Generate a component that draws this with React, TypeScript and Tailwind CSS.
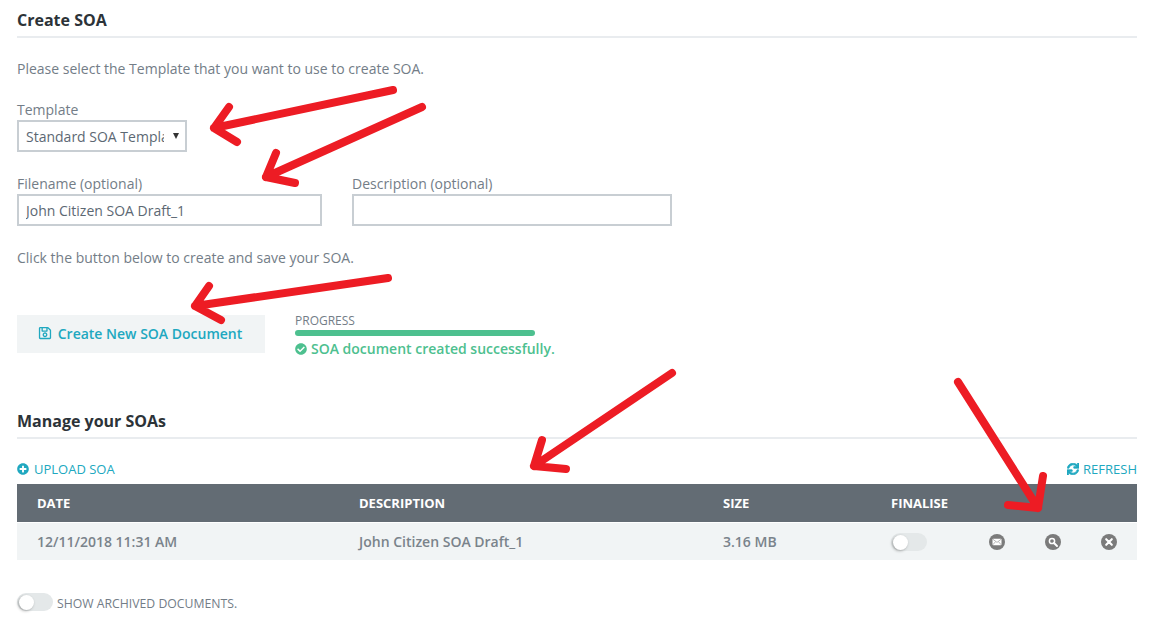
import { FaRegSave, FaCheckCircle, FaPlusCircle, FaSync } from 'react-icons/fa';

function Toggle() {
  return (
    <div className="relative h-[18px] w-[36px] rounded-full bg-[#e4e8e9]">
      <div className="absolute left-[2px] top-[2px] h-[15px] w-[15px] rounded-full bg-white shadow-[-1px_1px_3px_rgba(0,0,0,0.3)]" />
    </div>
  );
}

function MailIcon() {
  return (
    <svg width="16" height="16" viewBox="0 0 16 16">
      <circle cx="8" cy="8" r="8" fill="#7b7b7b" />
      <rect x="3.5" y="4.8" width="9" height="6.4" rx="0.8" fill="#fff" />
      <path d="M3.8 5.2 8 8.4l4.2-3.2M3.8 10.8 6.6 7.6M12.2 10.8 9.4 7.6" fill="none" stroke="#9a9a9a" strokeWidth="0.7" />
    </svg>
  );
}

function SearchIcon() {
  return (
    <svg width="16" height="16" viewBox="0 0 16 16">
      <circle cx="8" cy="8" r="8" fill="#7b7b7b" />
      <circle cx="7" cy="7" r="2.6" fill="none" stroke="#fff" strokeWidth="1.5" />
      <path d="M9 9l3 3" stroke="#fff" strokeWidth="2" strokeLinecap="round" />
    </svg>
  );
}

function CloseIcon() {
  return (
    <svg width="16" height="16" viewBox="0 0 16 16">
      <circle cx="8" cy="8" r="8" fill="#7b7b7b" />
      <path d="M5.2 5.2l5.6 5.6M10.8 5.2l-5.6 5.6" stroke="#fff" strokeWidth="2.1" strokeLinecap="round" />
    </svg>
  );
}

// red annotation arrows drawn on top of the screenshot
function Arrows() {
  const strokes = [
    'M393 90L214 128M229 107L214 128L237 142',
    'M422 107L266 177M276 153L266 177L295 183',
    'M388 278L195 306M209 286L195 306L221 320',
    'M672 373L534 466M542 440L534 466L566 469',
    'M958 382L1038 508M1043 476L1038 508L1008 505',
  ];
  return (
    <svg className="pointer-events-none absolute left-0 top-0" width="1154" height="638" viewBox="0 0 1154 638">
      {strokes.map((d) => (
        <path key={d} d={d} fill="none" stroke="#ed1c24" strokeWidth="8" strokeLinecap="round" strokeLinejoin="round" />
      ))}
    </svg>
  );
}

export default function App() {
  return (
    <div className="relative h-[638px] w-[1154px] overflow-hidden bg-white px-[17px] font-['Open_Sans',sans-serif] text-[14px] text-[#737d87]">
      <h2 className="mt-[9px] h-[29px] border-b-2 border-[#e9ecef] text-[16px] font-bold leading-[22px] text-[#2c3338]">
        Create SOA
      </h2>
      <p className="mt-[21px] leading-[20px]">Please select the Template that you want to use to create SOA.</p>

      <label className="mt-[21px] block leading-[20px]">Template</label>
      <div className="relative h-[32px] w-[170px]">
        <select className="block h-full w-full appearance-none border-2 border-[#c8ced3] bg-white pl-[7px] pr-[21px] text-[14px] text-[#5c6873]">
          <option>Standard SOA Template</option>
        </select>
        <span className="absolute right-[8px] top-[13px] h-0 w-0 border-x-[3.5px] border-t-[6px] border-x-transparent border-t-[#333]" />
      </div>

      <div className="mt-[22px] flex gap-[30px]">
        <div>
          <label className="block leading-[20px]">Filename (optional)</label>
          <input
            readOnly
            value="John Citizen SOA Draft_1"
            className="block h-[32px] w-[305px] border-2 border-[#c8ced3] px-[7px] text-[#5c6873]"
          />
        </div>
        <div>
          <label className="block leading-[20px]">Description (optional)</label>
          <input readOnly value="" className="block h-[32px] w-[320px] border-2 border-[#c8ced3] px-[7px]" />
        </div>
      </div>

      <p className="mt-[22px] leading-[20px]">Click the button below to create and save your SOA.</p>

      <div className="mt-[47px] flex items-start gap-[30px]">
        <button className="flex h-[38px] w-[248px] items-center justify-center gap-[6px] bg-[#f1f4f5] pb-[2px] pr-[2px] font-semibold text-[#20a8c0]">
          <FaRegSave className="h-[14px] w-[14px]" />
          Create New SOA Document
        </button>
        <div>
          <div className="text-[12px] leading-[12px]">PROGRESS</div>
          <div className="mt-[3px] h-[6px] w-[240px] rounded-full bg-[#4dc08f]" />
          <div className="mt-[3px] flex items-center gap-[4px] font-semibold leading-[20px] text-[#4dc08f]">
            <FaCheckCircle className="h-[12px] w-[12px]" />
            SOA document created successfully.
          </div>
        </div>
      </div>

      <h2 className="mt-[51px] h-[29px] border-b-2 border-[#e9ecef] text-[16px] font-bold leading-[22px] text-[#2c3338]">
        Manage your SOAs
      </h2>

      <div className="mt-[20px] flex h-[25px] items-start justify-between text-[13px] font-medium leading-[20px] text-[#20a8c0]">
        <span className="flex items-center gap-[5px]">
          <FaPlusCircle className="h-[12px] w-[12px]" />
          UPLOAD SOA
        </span>
        <span className="flex items-center gap-[4px]">
          <FaSync className="h-[12px] w-[12px]" stroke="currentColor" strokeWidth={30} />
          REFRESH
        </span>
      </div>

      <div className="grid h-[38px] grid-cols-[322px_364px_168px_1fr] items-center bg-[#636c74] pl-[20px] pt-px text-[13px] font-bold text-white">
        <span>DATE</span>
        <span>DESCRIPTION</span>
        <span>SIZE</span>
        <span>FINALISE</span>
      </div>
      <div className="mt-px grid h-[37px] grid-cols-[322px_364px_168px_98px_56px_56px_1fr] items-center bg-[#f1f4f5] pl-[20px] font-semibold text-[#7a838b]">
        <span>12/11/2018 11:31 AM</span>
        <span>John Citizen SOA Draft_1</span>
        <span>3.16 MB</span>
        <Toggle />
        <MailIcon />
        <SearchIcon />
        <CloseIcon />
      </div>

      <div className="mt-[31px] flex items-center gap-[4px] text-[12.25px]">
        <Toggle />
        <span className="pt-[4px]">SHOW ARCHIVED DOCUMENTS.</span>
      </div>

      <Arrows />
    </div>
  );
}
